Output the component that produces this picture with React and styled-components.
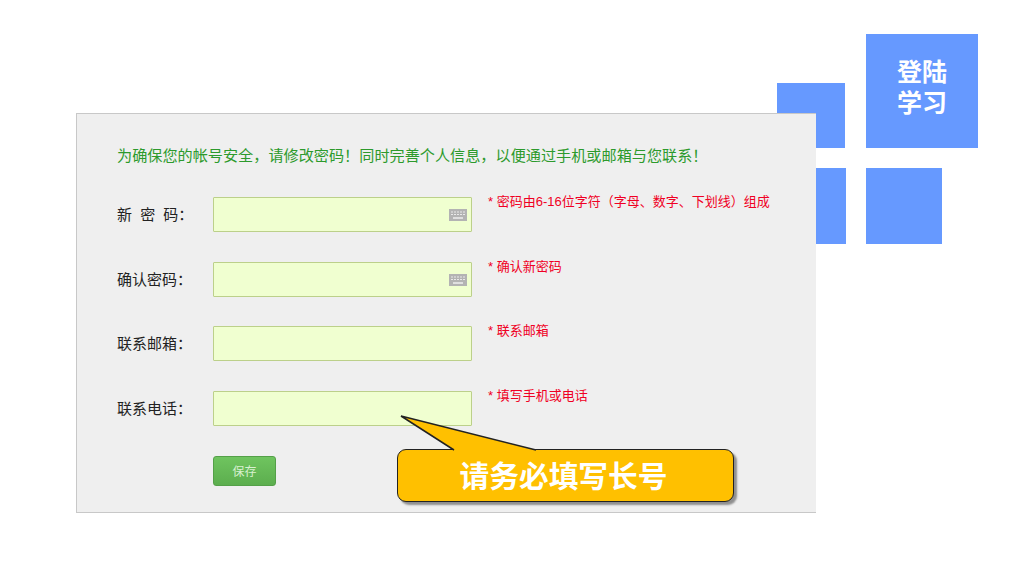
import React from 'react'
import styled, { createGlobalStyle } from 'styled-components'

const notice =
  '\u4e3a\u786e\u4fdd\u60a8\u7684\u5e10\u53f7\u5b89\u5168\uff0c\u8bf7\u4fee\u6539\u5bc6\u7801\uff01\u540c\u65f6\u5b8c\u5584\u4e2a\u4eba\u4fe1\u606f\uff0c\u4ee5\u4fbf\u901a\u8fc7\u624b\u673a\u6216\u90ae\u7bb1\u4e0e\u60a8\u8054\u7cfb\uff01'

const fields = [
  { label: '新 密 码\uff1a', hint: '* 密码由6-16位字符\uff08字母、数字、下划线\uff09组成', spaced: true, keyboard: true },
  { label: '确认密码\uff1a', hint: '* 确认新密码', keyboard: true },
  { label: '联系邮箱\uff1a', hint: '* 联系邮箱' },
  { label: '联系电话\uff1a', hint: '* 填写手机或电话' },
]

const Keyboard = () => (
  <KeyIcon viewBox="0 0 18 12" aria-hidden="true">
    <rect width="18" height="12" fill="#b3b3b3" />
    <path d="M2 3h14M2 5.5h14" stroke="#e9e9e9" strokeWidth="1" strokeDasharray="2 1" />
    <path d="M4 9h10" stroke="#f2f2f2" strokeWidth="1.4" />
  </KeyIcon>
)

export default function App() {
  return (
    <Page>
      <GlobalStyle />
      <Tiles>
        <LoginTile>
          登陆
          <br />
          学习
        </LoginTile>
        <CornerTile />
        <LowerLeftTile />
        <LowerRightTile />
      </Tiles>
      <Card>
        <Notice>{notice}</Notice>
        <Form>
          {fields.map((f) => (
            <Row key={f.label}>
              <Label $spaced={f.spaced}>{f.label}</Label>
              <InputWrap>
                <Input type="text" />
                {f.keyboard && <Keyboard />}
              </InputWrap>
              <Hint>{f.hint}</Hint>
            </Row>
          ))}
          <SaveButton type="button">保存</SaveButton>
        </Form>
        <Callout>
          <Tail viewBox="0 0 140 36" aria-hidden="true">
            <path d="M3 1 L56 35 L138 35 Z" fill="#ffc000" />
            <path d="M56 35 L3 1 L138 35" fill="none" stroke="#222" strokeWidth="1.5" />
          </Tail>
          请务必填写长号
        </Callout>
      </Card>
    </Page>
  )
}

const GlobalStyle = createGlobalStyle`
  html, body {
    margin: 0;
    background: #fff;
  }
  body {
    font-family: "Liberation Sans", "Noto Sans CJK SC", sans-serif;
  }
`

const Page = styled.main`
  position: relative;
  width: 1024px;
  height: 576px;
  padding: 113px 0 0 76px;
  box-sizing: border-box;
  overflow: hidden;
`

const Tiles = styled.div`
  position: absolute;
  left: 777px;
  top: 34px;
  display: grid;
  grid-template-columns: 69px 20px 76px 36px;
  grid-template-rows: 49px 65px 20px 76px;
`

const Tile = styled.div`
  background: #6699ff;
`

const LoginTile = styled(Tile)`
  grid-column: 3 / 5;
  grid-row: 1 / 3;
  padding-top: 23px;
  box-sizing: border-box;
  color: #fff;
  font-size: 25px;
  font-weight: 700;
  line-height: 31px;
  text-align: center;
`

const CornerTile = styled(Tile)`
  grid-column: 1;
  grid-row: 2;
  width: 68px;
`

const LowerLeftTile = styled(Tile)`
  grid-column: 1;
  grid-row: 4;
`

const LowerRightTile = styled(Tile)`
  grid-column: 3;
  grid-row: 4;
`

const Card = styled.section`
  position: relative;
  width: 740px;
  height: 400px;
  box-sizing: border-box;
  padding: 32px 0 0 40px;
  background: #efefef;
  border: 1px solid #c8c8c8;
  border-right: 0;
`

const Notice = styled.p`
  margin: 0;
  color: #2c9a2c;
  font-size: 15.15px;
  line-height: 20px;
  white-space: nowrap;
`

const Form = styled.form`
  display: flex;
  flex-direction: column;
  gap: 29.7px;
  margin-top: 31px;
`

const Row = styled.div`
  display: flex;
  align-items: center;
  height: 35px;
`

const Label = styled.label`
  width: 96px;
  padding-bottom: 2px;
  color: #222;
  font-size: 15px;
  white-space: nowrap;
  word-spacing: ${(p) => (p.$spaced ? '4px' : '0')};
`

const InputWrap = styled.div`
  position: relative;
  width: 259px;
  height: 35px;
`

const Input = styled.input`
  display: block;
  width: 100%;
  height: 100%;
  box-sizing: border-box;
  padding: 0 6px;
  background: #f0ffd0;
  border: 1px solid #bcd08a;
  border-radius: 1px;
  outline: 0;
`

const KeyIcon = styled.svg`
  position: absolute;
  right: 5px;
  top: 12px;
  width: 18px;
  height: 12px;
`

const Hint = styled.span`
  align-self: flex-start;
  margin: -4px 0 0 16px;
  color: #f00024;
  font-size: 13px;
  line-height: 18px;
  white-space: nowrap;
`

const SaveButton = styled.button`
  align-self: flex-start;
  width: 63px;
  height: 30px;
  margin: 0 0 0 96px;
  padding: 0;
  color: #d8f0d0;
  font-family: inherit;
  font-size: 12px;
  background: linear-gradient(#6fc45f, #5cae4e);
  border: 1px solid #54a048;
  border-radius: 3px;
`

const Callout = styled.div`
  position: absolute;
  left: 320px;
  top: 335px;
  width: 337px;
  height: 53px;
  box-sizing: border-box;
  display: flex;
  align-items: center;
  justify-content: center;
  padding: 0 4px 3px 0;
  color: #fff;
  font-size: 29.7px;
  font-weight: 700;
  background: #ffc000;
  border: 1.5px solid #222;
  border-radius: 9px;
  box-shadow: 3px 3px 2px #8f8f8f;
`

const Tail = styled.svg`
  position: absolute;
  left: 0;
  top: -35px;
  width: 140px;
  height: 36px;
  overflow: visible;
`
